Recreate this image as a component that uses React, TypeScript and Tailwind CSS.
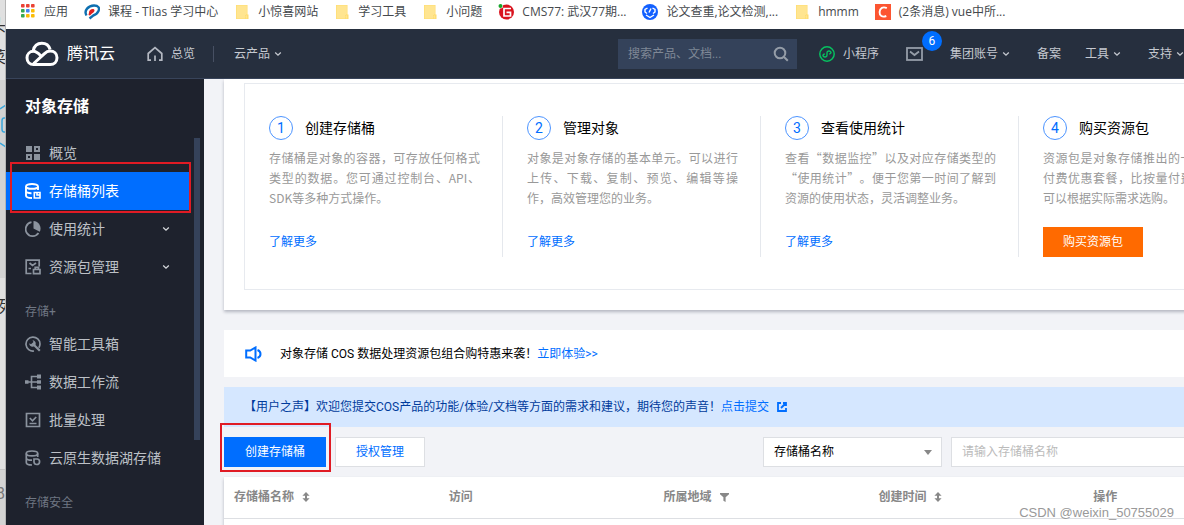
import React, { useState } from 'react';

type IconProps = { className?: string };

/* ---------- bookmark icons ---------- */

function AppsIcon() {
  const colors = ['#ea4335', '#ea4335', '#ea4335', '#34a853', '#4285f4', '#fbbc05', '#34a853', '#fbbc05', '#fbbc05'];
  return (
    <svg viewBox="0 0 16 16" className="w-4 h-4 shrink-0">
      {colors.map((color, i) => (
        <rect key={i} x={1 + (i % 3) * 5} y={Math.floor(i / 3) * 5} width="3.600" height="3.600" rx="0.800" fill={color} />
      ))}
    </svg>
  );
}

function FolderIcon() {
  return (
    <svg viewBox="0 0 16 16" className="w-4 h-4 shrink-0">
      <path d="M2 1h11.500v9.500h1V15H2z" fill="#ffdc6e" />
      <path d="M2.600 1.600h10.300V10L11 11.500v2.900H2.600z" fill="#ffe591" />
      <path d="M11.700 14.400v-2.200l1.500-1.500v3.700z" fill="#ffe591" />
    </svg>
  );
}

function TliasIcon() {
  return (
    <svg viewBox="0 0 16 16" className="w-4 h-4 shrink-0" fill="none">
      <path d="M2.500 11.500C-.5 6.500 4.500 1.500 10 1.500c4.500 0 5.800 2.500 4.500 5.500-1 2.200-3 3.800-5.300 4.500l-3.700 3" stroke="#0d6fb0" strokeWidth="2.400" />
      <path d="M5 8.500C5 6 7.500 4.500 9.500 5c2 .8.8 3.500-1.500 4.500L6 11.500l-1.500-.5z" fill="#e02020" />
    </svg>
  );
}

function CmsIcon() {
  return (
    <svg viewBox="0 0 16 16" className="w-4 h-4 shrink-0" fill="none">
      <circle cx="8.500" cy="8" r="7.500" fill="#d9131e" />
      <path d="M13 4.500H6v7.500h6.500V8.300H8.500" stroke="#fff" strokeWidth="1.700" />
      <circle cx="2.500" cy="2" r="2.500" fill="#fff" />
      <circle cx="2.500" cy="2" r="2" fill="#16a52b" />
    </svg>
  );
}

function PaperIcon() {
  return (
    <svg viewBox="0 0 16 16" className="w-4 h-4 shrink-0" fill="none">
      <circle cx="8" cy="8" r="8" fill="#1260ff" />
      <path d="M5.500 4 3 5.500V8l2 1.500M10.500 4 13 5.500V8l-2 1.500M9 4.500 7 8.500M4 11l4 2.500 4-2.500" stroke="#fff" strokeWidth="1.400" />
    </svg>
  );
}

function CsdnIcon() {
  return (
    <svg viewBox="0 0 16 16" className="w-4 h-4 shrink-0" fill="none">
      <rect width="16" height="16" fill="#fc5531" />
      <path d="M11.800 4.200C8 2.200 4.800 4.200 4.600 8c-.2 3.700 2.600 5.700 6.700 4" stroke="#fff" strokeWidth="1.900" />
    </svg>
  );
}

/* ---------- header icons ---------- */

function CloudLogo() {
  return (
    <svg viewBox="0 0 34 26" className="w-[34px] h-[26px] shrink-0" fill="none" stroke="#fff" strokeWidth="3">
      <path d="M8.300 9.500C9.200 5 12.500 2.200 16.800 2.200c4.200 0 7.300 2.600 8.300 6.300" />
      <path d="M15.500 14.500C12.500 11.500 10.800 10.300 8.500 10.300 4.700 10.300 2 13.200 2 16.800 2 20.700 4.800 23.500 8.500 23.500h16.700c4 0 6.800-2.800 6.800-6.700 0-4-3-6.700-6.800-6.700-2.500 0-4.200 1-6 2.700L8.700 22.500" />
    </svg>
  );
}

function HomeIcon() {
  return (
    <svg viewBox="0 0 16 16" className="w-4 h-4 shrink-0" fill="none" stroke="#b4b9c2" strokeWidth="1.700">
      <path d="M1.200 15V7.500L8 1.700l6.800 5.800V15M1 14.200h3M15 14.200h-3M8 9.500V15" />
    </svg>
  );
}

function Caret({ className = '' }: IconProps) {
  return (
    <svg viewBox="0 0 8 6" className={`w-2 h-1.5 shrink-0 ${className}`} fill="none" stroke="currentColor" strokeWidth="1.300">
      <path d="M1.200 1.500 4 4.200 6.800 1.500" />
    </svg>
  );
}

function SearchIcon() {
  return (
    <svg viewBox="0 0 16 16" className="w-4 h-4 shrink-0" fill="none" stroke="#959da8" strokeWidth="2">
      <circle cx="7" cy="7" r="5.300" />
      <path d="m11 11 3.800 3.800" />
    </svg>
  );
}

function MiniProgramIcon() {
  return (
    <svg viewBox="0 0 16 16" className="w-4 h-4 shrink-0" fill="none" stroke="#07c160">
      <circle cx="8" cy="8" r="7.200" strokeWidth="1.500" />
      <path d="M5.800 8c-1.500.1-2 1-1.800 1.800.5 1.700 4 1.600 4-.5V6.700c0-2.100 3.300-2.200 3.900-.5.2.9-.4 1.700-1.700 1.800" strokeWidth="1.400" />
    </svg>
  );
}

function MailIcon() {
  return (
    <svg viewBox="0 0 17 14" className="w-[17px] h-[14px] shrink-0" fill="none" stroke="#959da8" strokeWidth="1.800">
      <rect x="1" y="1" width="15" height="12" />
      <path d="m4 4.500 4.500 3.500L13 4.500" />
    </svg>
  );
}

/* ---------- sidebar icons ---------- */

function OverviewIcon() {
  return (
    <svg viewBox="0 0 16 16" className="w-4 h-4 shrink-0" fill="currentColor">
      <path d="M1 1h6v6H1zM9 9h6v6H9z" />
      <path fillRule="evenodd" d="M9 1h6v6H9zm2 2v2h2V3zM1 9h6v6H1zm2 2v2h2v-2z" />
    </svg>
  );
}

function BucketIcon() {
  return (
    <svg viewBox="0 0 16 16" className="w-4 h-4 shrink-0" fill="none" stroke="currentColor" strokeWidth="1.900">
      <ellipse cx="7" cy="3.400" rx="6" ry="2.400" />
      <path d="M1 3.500v9C1 14 3.500 15 7 15M13 3.500V7M1 8c0 1.500 2.500 2.300 5.500 2.200" />
      <path d="M9.300 9.500H15V15H9.300zM12 9.500V12h3" strokeWidth="1.600" />
    </svg>
  );
}

function StatsIcon() {
  return (
    <svg viewBox="0 0 16 16" className="w-4 h-4 shrink-0" fill="none" stroke="currentColor" strokeWidth="1.800">
      <path d="M6.500 1.200a7 7 0 1 0 7 10.800" />
      <path d="M8.500 0A7.500 7.500 0 0 1 14.800 10.800L8.500 7.500z" fill="currentColor" stroke="none" />
    </svg>
  );
}

function PackageIcon() {
  return (
    <svg viewBox="0 0 16 16" className="w-4 h-4 shrink-0" fill="none" stroke="currentColor" strokeWidth="1.700">
      <path d="M14.200 7.500V1.200H1.200v13.300H6.500" />
      <path d="M4.500 4 7.500 6.500 11 4M3.500 9.500h2.500M8.500 10.500H15v4.200H8.500zM10.200 10.500V8.300h3.300v2.200" />
    </svg>
  );
}

function ToolboxIcon() {
  return (
    <svg viewBox="0 0 16 16" className="w-4 h-4 shrink-0" fill="none" stroke="currentColor" strokeWidth="1.700">
      <path d="M9 15A7 7 0 1 1 15 8c0 1.500-.5 2.700-1.200 3.800" />
      <path d="m9 9 5.800 5.800" strokeWidth="2.200" />
      <path d="M7.500 4.200 8.500 6 6 8.300 4.300 7.300C4 10 7 11.500 9.200 10.300 11.500 9 11.500 4.500 7.500 4.200z" fill="currentColor" stroke="none" />
    </svg>
  );
}

function FlowIcon() {
  return (
    <svg viewBox="0 0 16 16" className="w-4 h-4 shrink-0" fill="none" stroke="currentColor" strokeWidth="1.600">
      <path d="M3 8h10M12 2.500H6.500v11H12" />
      <path d="M0 6.300h3.500v3.400H0zM12 .5h4v4h-4zM12 6.300h4v3.400h-4zM12 11.500h4v4h-4z" fill="currentColor" stroke="none" />
    </svg>
  );
}

function BatchIcon() {
  return (
    <svg viewBox="0 0 16 16" className="w-4 h-4 shrink-0" fill="none" stroke="currentColor" strokeWidth="1.700">
      <path d="M1.500 1.500h13v13h-13zM4.800 6l2.700 2.800L11.200 5M4.500 11.500h7" />
    </svg>
  );
}

function LakeIcon() {
  return (
    <svg viewBox="0 0 16 16" className="w-4 h-4 shrink-0" fill="none" stroke="currentColor" strokeWidth="1.700">
      <ellipse cx="7" cy="3.400" rx="5.700" ry="2.400" />
      <path d="M1.300 3.500v9C1.300 14 4 15 7 15M12.700 3.500V7M1.300 8c0 1.500 2.500 2.300 5.700 2.200" />
      <path d="M9 9h3.500a2.800 2.800 0 1 1-3.500 3z" />
    </svg>
  );
}

/* ---------- content icons ---------- */

function SpeakerIcon() {
  return (
    <svg viewBox="0 0 17 16" className="w-[17px] h-4 shrink-0" fill="none" stroke="#006eff" strokeWidth="2">
      <path d="M1.200 4.500h4L10.500 1.500v13L5.200 11.500h-4zM12.500 4c4 1.500 4 6.500 0 8" />
    </svg>
  );
}

function ExternalIcon() {
  return (
    <svg viewBox="0 0 10 10" className="w-2.5 h-2.5 shrink-0" fill="none" stroke="#006eff" strokeWidth="1.800">
      <path d="M4 1H1v8h8V6M6 1h3v3M9 1 4 6" />
    </svg>
  );
}

function SortIcon() {
  return (
    <svg viewBox="0 0 8 10" className="w-2 h-2.5 shrink-0" fill="currentColor">
      <path d="M4 0l3.600 3.800H5v2.400h2.600L4 10 .4 6.200H3V3.800H.4z" />
    </svg>
  );
}

function FilterIcon() {
  return (
    <svg viewBox="0 0 9 9" className="w-[9px] h-[9px] shrink-0" fill="currentColor">
      <path d="M0 0h9v1.300L5.600 4.200V9L3.400 7.800V4.200L0 1.300z" />
    </svg>
  );
}

/* ---------- data ---------- */

const BOOKMARKS = [
  { icon: AppsIcon, label: '应用' },
  { icon: TliasIcon, label: '课程 - Tlias 学习中心' },
  { icon: FolderIcon, label: '小惊喜网站' },
  { icon: FolderIcon, label: '学习工具' },
  { icon: FolderIcon, label: '小问题' },
  { icon: CmsIcon, label: 'CMS77: 武汉77期...' },
  { icon: PaperIcon, label: '论文查重,论文检测,...' },
  { icon: FolderIcon, label: 'hmmm' },
  { icon: CsdnIcon, label: '(2条消息) vue中所...' },
];

const MENU = [
  { icon: OverviewIcon, label: '概览' },
  { icon: BucketIcon, label: '存储桶列表', active: true },
  { icon: StatsIcon, label: '使用统计', expandable: true },
  { icon: PackageIcon, label: '资源包管理', expandable: true },
];

const STORAGE_MENU = [
  { icon: ToolboxIcon, label: '智能工具箱' },
  { icon: FlowIcon, label: '数据工作流' },
  { icon: BatchIcon, label: '批量处理' },
  { icon: LakeIcon, label: '云原生数据湖存储' },
];

const STEPS = [
  { title: '创建存储桶', text: '存储桶是对象的容器，可存放任何格式类型的数据。您可通过控制台、API、SDK等多种方式操作。' },
  { title: '管理对象', text: '对象是对象存储的基本单元。可以进行上传、下载、复制、预览、编辑等操作，高效管理您的业务。' },
  { title: '查看使用统计', text: '查看“数据监控”以及对应存储类型的“使用统计”。便于您第一时间了解到资源的使用状态，灵活调整业务。' },
  { title: '购买资源包', text: '资源包是对象存储推出的一种全新的预付费优惠套餐，比按量付费更优惠，您可以根据实际需求选购。', buy: true },
];

const COLUMNS = [
  { label: '存储桶名称', icon: SortIcon },
  { label: '访问' },
  { label: '所属地域', icon: FilterIcon },
  { label: '创建时间', icon: SortIcon },
  { label: '操作' },
];

/* ---------- sections ---------- */

function BookmarkBar() {
  return (
    <nav className="h-[29px] shrink-0 flex items-center gap-4 pl-3.5 pb-1.5 bg-white overflow-hidden font-['Open_Sans','Noto_Sans_CJK_SC',sans-serif] text-xs text-[#45494d]">
      {BOOKMARKS.map(({ icon: Icon, label }) => (
        <a key={label} href="#" className="flex items-center gap-2 shrink-0 whitespace-nowrap">
          <Icon />
          {label}
        </a>
      ))}
    </nav>
  );
}

function Header() {
  return (
    <header className="h-[50px] shrink-0 flex items-center pl-[19px] bg-[#262f3e] border-b border-[#38445a] text-xs text-[#c5c9d0] whitespace-nowrap overflow-hidden">
      <a href="#" className="flex items-center gap-2 text-base text-white">
        <CloudLogo />
        腾讯云
      </a>
      <a href="#" className="flex items-center gap-2 ml-8">
        <HomeIcon />
        总览
      </a>
      <span className="w-px h-4 ml-[18px] mr-5 bg-[#475063]" />
      <button type="button" className="flex items-center gap-1">
        云产品 <Caret />
      </button>

      <div className="ml-auto flex items-center shrink-0">
        <label className="w-[179px] h-[30px] mr-[22px] pl-2.5 pr-2 flex items-center bg-[#34425a]">
          <input
            type="text"
            aria-label="搜索"
            placeholder="搜索产品、文档..."
            className="min-w-0 flex-1 bg-transparent outline-none placeholder:text-[#7f8896]"
          />
          <SearchIcon />
        </label>
        <a href="#" className="flex items-center gap-2 mr-[27px]">
          <MiniProgramIcon />
          小程序
        </a>
        <a href="#" aria-label="消息" className="relative mr-[27px]">
          <MailIcon />
          <span className="absolute left-4 -top-4 w-5 h-5 rounded-full flex items-center justify-center bg-[#006eff] text-white">
            6
          </span>
        </a>
        <button type="button" className="flex items-center gap-1 mr-[27px]">
          集团账号 <Caret />
        </button>
        <a href="#" className="mr-6">备案</a>
        <button type="button" className="flex items-center gap-1 mr-[27px]">
          工具 <Caret />
        </button>
        <button type="button" className="flex items-center gap-1">
          支持 <Caret />
        </button>
      </div>
    </header>
  );
}

type MenuEntry = { icon: React.FC; label: string; active?: boolean; expandable?: boolean };

function MenuList({ items }: { items: MenuEntry[] }) {
  return (
    <ul>
      {items.map(({ icon: Icon, label, active, expandable }) => (
        <li key={label} className="relative">
          <a
            href="#"
            className={`h-[38px] flex items-center gap-2 pl-[19px] pr-5 text-sm ${
              active ? 'bg-[#006eff] text-white' : 'text-[#8b939e]'
            }`}
          >
            <Icon />
            <span className={active ? 'text-white' : 'text-[#bcc0c6]'}>{label}</span>
            {expandable && <Caret className="ml-auto text-[#d5d8dc]" />}
          </a>
          {active && (
            <div className="absolute z-10 -top-2.5 left-1 -right-px -bottom-[3px] border-2 border-[#e01b24] pointer-events-none" />
          )}
        </li>
      ))}
    </ul>
  );
}

function Sidebar() {
  return (
    <aside className="w-[198px] shrink-0 flex flex-col bg-[#1e222d] overflow-hidden">
      <h2 className="h-[55px] shrink-0 flex items-center pl-[19px] text-base font-bold text-white">对象存储</h2>
      <div className="flex items-start">
        <div className="w-[184px]">
          <MenuList items={MENU} />
          <h3 className="h-[39px] pt-[18px] pl-[19px] text-xs text-[#6f7783]">存储+</h3>
          <MenuList items={STORAGE_MENU} />
          <h3 className="h-[39px] pt-[18px] pl-[19px] text-xs text-[#6f7783]">存储安全</h3>
        </div>
        <div className="w-1.5 h-[302px] mt-1 ml-1 bg-[#35425a]" />
      </div>
    </aside>
  );
}

function Guide() {
  return (
    <section className="px-5 pt-1 pb-5 bg-white shadow-[0_2px_3px_rgba(54,58,80,0.32)]">
      <div className="grid grid-cols-4 pt-8 pb-8 border border-[#e7eaef]">
        {STEPS.map((step, i) => (
          <div key={step.title} className="pl-6 pr-[22px] border-r border-[#e5e8ed] last:border-r-0">
            <h3 className="h-6 flex items-center gap-3 text-sm text-black">
              <span className="w-6 h-6 rounded-full border border-[#4c94ff] flex items-center justify-center text-[#006eff]">
                {i + 1}
              </span>
              {step.title}
            </h3>
            <p className="mt-2 h-[60px] text-xs leading-5 text-justify text-[#999] font-['Noto_Sans_CJK_SC',sans-serif]">
              {step.text}
            </p>
            <div className="mt-[19px] h-[30px] flex items-center text-xs">
              {step.buy ? (
                <button type="button" className="w-[100px] h-[30px] bg-[#ff6a00] text-white">购买资源包</button>
              ) : (
                <a href="#" className="text-[#006eff]">了解更多</a>
              )}
            </div>
          </div>
        ))}
      </div>
    </section>
  );
}

function Toolbar() {
  const [field, setField] = useState('name');
  const [keyword, setKeyword] = useState('');

  return (
    <div className="mt-2.5 flex items-center gap-[9px] text-xs">
      <div className="relative">
        <button type="button" className="block w-[102px] h-[30px] bg-[#006eff] text-white">创建存储桶</button>
        <div className="absolute -top-3.5 -left-1 -right-[5px] -bottom-[5px] border-2 border-[#e01b24] pointer-events-none" />
      </div>
      <button type="button" className="w-[90px] h-[30px] border border-[#dddfe3] bg-white text-[#006eff]">授权管理</button>

      <div className="relative ml-auto">
        <select
          aria-label="搜索字段"
          value={field}
          onChange={(e) => setField(e.target.value)}
          className="block w-[179px] h-[30px] pl-2.5 pr-6 appearance-none rounded-none border border-[#dddfe3] bg-white text-black"
        >
          <option value="name">存储桶名称</option>
        </select>
        <svg viewBox="0 0 8 5" className="absolute right-2.5 top-[13px] w-2 h-[5px] pointer-events-none" fill="#888">
          <path d="M0 0h8L4 5z" />
        </svg>
      </div>
      <input
        type="text"
        aria-label="存储桶名称"
        placeholder="请输入存储桶名称"
        value={keyword}
        onChange={(e) => setKeyword(e.target.value)}
        className="w-[347px] h-[30px] px-2.5 border border-[#dddfe3] bg-white placeholder:text-[#bbb]"
      />
    </div>
  );
}

function BucketTable() {
  return (
    <div className="mt-2.5 h-20 bg-white shadow-[0_2px_3px_rgba(54,58,80,0.32)]">
      <table className="w-full table-fixed text-xs text-[#888]">
        <thead>
          <tr className="h-[41px] border-b border-[#dddfe3]">
            {COLUMNS.map(({ label, icon: Icon }) => (
              <th key={label} scope="col" className="px-2.5 text-left font-bold">
                <span className="flex items-center gap-2">
                  {label}
                  {Icon && <Icon />}
                </span>
              </th>
            ))}
          </tr>
        </thead>
      </table>
    </div>
  );
}

/* Sliver of the page behind the browser window */
function BackdropStrip() {
  return (
    <div aria-hidden="true" className="w-1.5 shrink-0 flex flex-col overflow-hidden bg-[#e0e0e0] border-r border-[#b5b5b5] text-base leading-6 text-[#333]">
      <div className="mt-3.5 w-4 -ml-2.5">头</div>
      <div className="mt-2 w-4 -ml-2.5">菜</div>
      <div className="mt-2.5 h-[198px] pt-6 shrink-0 bg-[#d3d3d3]">
        <svg viewBox="0 0 6 44" className="w-1.5 h-11" fill="none" stroke="#3aa6dc">
          <path d="M0 5 6 1M0 39l6 4M6 14H4q-2 0-2 3v8q0 3 2 3h2" strokeWidth="1.500" />
        </svg>
      </div>
      <div className="mt-[17px] w-4 -ml-0.5">列</div>
      <div className="mt-[150px] h-14 pt-3 shrink-0 border-t border-[#c4c4c4] bg-[#d3d3d3] text-[#777]">
        <div className="-ml-1">8</div>
      </div>
    </div>
  );
}

export default function App() {
  return (
    <div
      lang="zh-CN"
      className="relative h-screen flex overflow-hidden font-['Roboto','Noto_Sans_CJK_SC',sans-serif] [text-spacing-trim:space-all]"
    >
      <BackdropStrip />
      <div className="min-w-0 flex-1 flex flex-col">
        <BookmarkBar />
        <Header />
        <div className="min-h-0 flex-1 flex">
          <Sidebar />
          <main className="min-w-0 flex-1 overflow-hidden bg-[#f2f3f7]">
            <div className="min-w-[1114px] px-5">
              <Guide />

              <section className="mt-5 h-[47px] pl-[21px] flex items-center text-xs text-black bg-white">
                <SpeakerIcon />
                <p className="ml-[18px]">
                  对象存储 COS 数据处理资源包组合购特惠来袭！
                  <a href="#" className="text-[#006eff]">立即体验&gt;&gt;</a>
                </p>
              </section>

              <section className="mt-2.5 h-10 pl-5 flex items-center text-xs text-[#003b9c] bg-[#d5e7ff]">
                <p>【用户之声】欢迎您提交COS产品的功能/体验/文档等方面的需求和建议，期待您的声音！</p>
                <a href="#" className="flex items-center gap-2 text-[#006eff]">
                  点击提交 <ExternalIcon />
                </a>
              </section>

              <Toolbar />
              <BucketTable />
            </div>
          </main>
        </div>
      </div>
      <span className="absolute right-2.5 bottom-1 text-[13px] leading-4 text-[#999] font-['Liberation_Sans',sans-serif] pointer-events-none">
        CSDN @weixin_50755029
      </span>
    </div>
  );
}
